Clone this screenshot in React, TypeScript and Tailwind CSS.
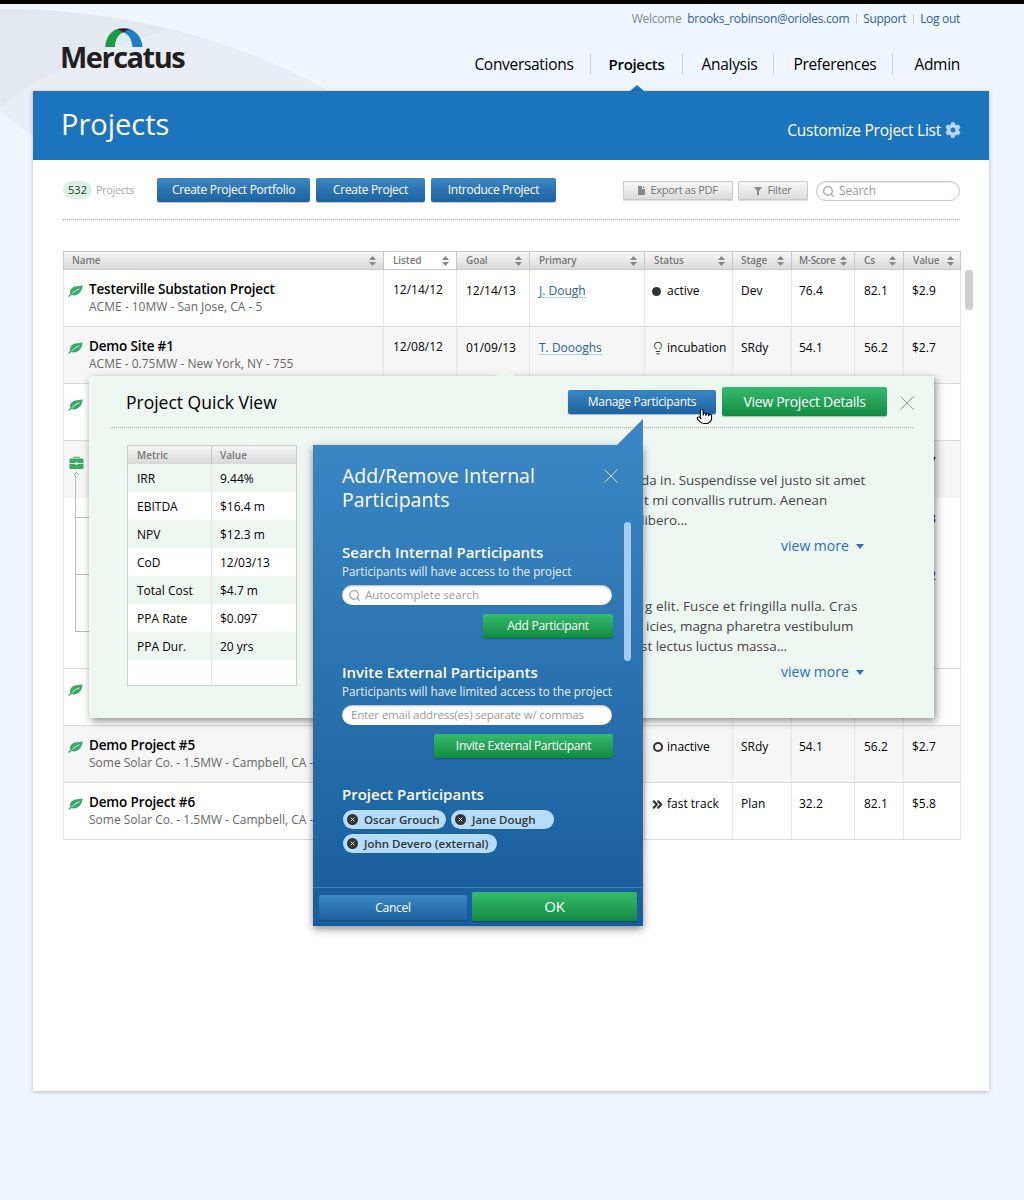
import { Search, Lightbulb, ChevronsRight, Pointer } from 'lucide-react';
import { FaCog } from 'react-icons/fa';

const font = '[font-family:"Open_Sans","Noto_Sans",sans-serif]';

const blueBtn = 'bg-gradient-to-b from-[#3a86c4] to-[#1c639f] text-white rounded-[2px] shadow-[0_1px_1px_rgba(0,0,0,0.25)] flex items-center justify-center tracking-[-0.3px]';
const greenBtn = 'bg-gradient-to-b from-[#35bb6e] to-[#118a42] text-white rounded-[2px] shadow-[0_1px_1px_rgba(0,0,0,0.25)] flex items-center justify-center tracking-[-0.3px]';
const grayBtn = 'bg-gradient-to-b from-[#f7f7f7] to-[#dcdcdc] border border-[#c9c9c9] text-[#777] rounded-[1px] text-[11px] tracking-[-0.3px] flex items-center justify-center gap-[5px] shadow-[0_1px_1px_rgba(0,0,0,0.15)]';

const columns = 'grid grid-cols-[320px_73px_73px_115px_88px_59px_63px_49px_57px]';

const headers = [
  { label: 'Name', cls: 'pl-[8px] bg-transparent' },
  { label: 'Listed', cls: 'pl-[9px] bg-white' },
  { label: 'Goal', cls: 'pl-[9px]' },
  { label: 'Primary', cls: 'pl-[9px]' },
  { label: 'Status', cls: 'pl-[9px]' },
  { label: 'Stage', cls: 'pl-[8px]' },
  { label: 'M-Score', cls: 'pl-[7px] tracking-[-0.4px]' },
  { label: 'Cs', cls: 'pl-[9px]' },
  { label: 'Value', cls: 'pl-[9px]' },
];

const SortArrows = () => (
  <svg width="7" height="10" viewBox="0 0 7 10" className="shrink-0">
    <path d="M3.5 0 L7 4 H0 Z M3.5 10 L7 6 H0 Z" fill="#888" />
  </svg>
);

const LeafIcon = () => (
  <svg width="15" height="12" viewBox="0 0 15 12" className="shrink-0">
    <path d="M0.3 11.5 C0.8 10.2 1.6 9.4 2.4 9 C1.2 6 3 2.6 7 1.6 C9.5 1 12.5 1.2 14.7 0.3 C14.3 3.5 13.5 6.5 11 8.5 C8.5 10.5 5.5 10.8 3.6 9.9 C2.6 10.2 1.8 10.8 1.4 11.7 Z" fill="#3aa968" />
    <path d="M3.6 9 C5.5 6.8 8 5.2 11.5 3.8" stroke="#fff" strokeWidth="0.8" fill="none" />
  </svg>
);

const BriefcaseIcon = () => (
  <svg width="15" height="22" viewBox="0 0 15 22" className="shrink-0 ml-px">
    <path d="M5 2.5 V1.2 H10 V2.5" stroke="#3aa968" strokeWidth="1.1" fill="none" />
    <rect x="0.5" y="2.5" width="14" height="10.5" rx="1.2" fill="#3aa968" />
    <path d="M0.5 7.5 H14.5" stroke="#fff" strokeWidth="0.8" />
    <rect x="6" y="6.5" width="3" height="2" fill="#fff" />
    <path d="M5 19 L7.5 16.5 L10 19" stroke="#3aa968" strokeWidth="0.8" fill="none" />
  </svg>
);

const CloseIcon = ({ color }: { color: string }) => (
  <svg width="14" height="14" viewBox="0 0 14 14">
    <path d="M0.5 0.5 L13.5 13.5 M13.5 0.5 L0.5 13.5" stroke={color} strokeWidth="1" />
  </svg>
);

const Caret = () => (
  <svg width="8" height="5" viewBox="0 0 8 5">
    <path d="M0 0 H8 L4 5 Z" fill="#2d6fae" />
  </svg>
);

const ChipX = () => (
  <svg width="11" height="11" viewBox="0 0 11 11" className="shrink-0">
    <circle cx="5.5" cy="5.5" r="5.5" fill="#333" />
    <path d="M3.6 3.6 L7.4 7.4 M7.4 3.6 L3.6 7.4" stroke="#ddd" strokeWidth="1" />
  </svg>
);

type Row = {
  icon: 'leaf' | 'case' | 'none';
  name?: string;
  sub?: string;
  listed?: string;
  goal?: string;
  primary?: string;
  status?: string;
  statusIcon?: React.ReactNode;
  stage?: string;
  score?: string;
  cs?: string;
  value?: string;
  shaded?: boolean;
  noBorder?: boolean;
};

const rows: Row[] = [
  { icon: 'leaf', name: 'Testerville Substation Project', sub: 'ACME - 10MW - San Jose, CA - 5', listed: '12/14/12', goal: '12/14/13', primary: 'J. Dough', status: 'active', statusIcon: <span className="w-[9px] h-[9px] rounded-full bg-[#333] ml-px" />, stage: 'Dev', score: '76.4', cs: '82.1', value: '$2.9' },
  { icon: 'leaf', name: 'Demo Site #1', sub: 'ACME - 0.75MW - New York, NY - 755', listed: '12/08/12', goal: '01/09/13', primary: 'T. Doooghs', status: 'incubation', statusIcon: <Lightbulb size={14} strokeWidth={1.7} color="#333" />, stage: 'SRdy', score: '54.1', cs: '56.2', value: '$2.7', shaded: true },
  { icon: 'leaf' },
  { icon: 'case', value: '$8.7', shaded: true, noBorder: true },
  { icon: 'none', value: '$1.3', noBorder: true },
  { icon: 'none', value: '$4.2', noBorder: true },
  { icon: 'none', value: '$3.1' },
  { icon: 'leaf' },
  { icon: 'leaf', name: 'Demo Project #5', sub: 'Some Solar Co. - 1.5MW - Campbell, CA - 5', status: 'inactive', statusIcon: <span className="w-[10px] h-[10px] rounded-full border-2 border-[#333] ml-[2px]" />, stage: 'SRdy', score: '54.1', cs: '56.2', value: '$2.7', shaded: true },
  { icon: 'leaf', name: 'Demo Project #6', sub: 'Some Solar Co. - 1.5MW - Campbell, CA - 5', status: 'fast track', statusIcon: <ChevronsRight size={15} strokeWidth={3.5} color="#333" className="-ml-[1px]" />, stage: 'Plan', score: '32.2', cs: '82.1', value: '$5.8' },
];

const metrics = [
  ['IRR', '9.44%'],
  ['EBITDA', '$16.4 m'],
  ['NPV', '$12.3 m'],
  ['CoD', '12/03/13'],
  ['Total Cost', '$4.7 m'],
  ['PPA Rate', '$0.097'],
  ['PPA Dur.', '20 yrs'],
];

const cell = 'border-r border-[#e6e6e6] text-[12px] text-black';

function TableRow({ row }: { row: Row }) {
  return (
    <div className={`${columns} h-[57px] border-l border-[#e6e6e6] ${row.noBorder ? '' : 'border-b border-b-[#dcdcdc]'} ${row.shaded ? 'bg-[#f6f6f6]' : 'bg-white'}`}>
      <div className={`${cell} relative flex pl-[4px] pt-[10px]`}>
        <div className="w-[21px] pt-[5px]">
          {row.icon === 'leaf' && <LeafIcon />}
          {row.icon === 'case' && <BriefcaseIcon />}
        </div>
        {row.name && (
          <div className="whitespace-nowrap">
            <div className="text-[13.5px] leading-[18px] font-semibold text-black tracking-[-0.15px]">{row.name}</div>
            <div className="text-[12px] leading-[18px] text-[#666]">{row.sub}</div>
          </div>
        )}
      </div>
      <div className={`${cell} pl-[9px] pt-[11px]`}>{row.listed}</div>
      <div className={`${cell} pl-[9px] pt-[12px]`}>{row.goal}</div>
      <div className={`${cell} pl-[9px] pt-[12px]`}>
        {row.primary && <span className="text-[#2d6299] border-b border-[#b9cde2] leading-[13px] inline-block">{row.primary}</span>}
      </div>
      <div className={`${cell} pt-[13px] pl-[6px] flex items-start text-[#444] whitespace-nowrap`}>
        <span className="w-[16px] h-[16px] flex items-center">{row.statusIcon}</span>
        <span className="leading-[16px]">{row.status}</span>
      </div>
      <div className={`${cell} pl-[8px] pt-[12px]`}>{row.stage}</div>
      <div className={`${cell} pl-[7px] pt-[12px]`}>{row.score}</div>
      <div className={`${cell} pl-[9px] pt-[12px]`}>{row.cs}</div>
      <div className={`${cell} pl-[8px] pt-[12px]`}>{row.value}</div>
    </div>
  );
}

function ParticipantsModal() {
  return (
    <div className="absolute left-[224px] top-[69px] w-[330px] h-[481px] bg-gradient-to-b from-[#3a86c4] to-[#175d9b] shadow-[0_3px_8px_rgba(0,0,0,0.45)] text-white">
      {/* speech tail pointing at the button */}
      <svg width="26" height="26" viewBox="0 0 26 26" className="absolute right-0 -top-[26px]">
        <path d="M0 26 L26 0 V26 Z" fill="#3a86c4" />
      </svg>
      <div className="absolute left-[29px] top-[19px] w-[240px] text-[19.5px] leading-[24px]">Add/Remove Internal Participants</div>
      <div className="absolute left-[291px] top-[24px]"><CloseIcon color="#cfe2f3" /></div>
      <div className="absolute left-[311px] top-[77px] w-[7px] h-[139px] rounded-full bg-[#a9cbe9]" />

      <div className="absolute left-[29px] top-[97px] w-[271px]">
        <div className="text-[15px] leading-[20px] font-semibold whitespace-nowrap">Search Internal Participants</div>
        <div className="text-[11.7px] leading-[18px] text-[#e6f0f9] whitespace-nowrap">Participants will have access to the project</div>
        <div className="mt-[5px] w-[270px] h-[20px] rounded-full bg-white shadow-[inset_0_1px_2px_rgba(0,0,0,0.3)] flex items-center pl-[6px] gap-[4px] text-[11.5px] text-[#999]">
          <Search size={13} color="#aaa" strokeWidth={2.5} />
          Autocomplete search
        </div>
        <div className="mt-[9px] flex justify-end">
          <div className={`${greenBtn} w-[130px] h-[24px] text-[12px]`}>Add Participant</div>
        </div>

        <div className="mt-[24px] text-[15px] leading-[20px] font-semibold whitespace-nowrap">Invite External Participants</div>
        <div className="text-[11.7px] leading-[18px] text-[#e6f0f9] whitespace-nowrap">Participants will have limited access to the project</div>
        <div className="mt-[5px] w-[270px] h-[20px] rounded-full bg-white shadow-[inset_0_1px_2px_rgba(0,0,0,0.3)] flex items-center pl-[9px] text-[11.5px] tracking-[-0.17px] text-[#999] whitespace-nowrap">
          Enter email address(es) separate w/ commas
        </div>
        <div className="mt-[9px] flex justify-end">
          <div className={`${greenBtn} w-[179px] h-[24px] text-[12px]`}>Invite External Participant</div>
        </div>

        <div className="mt-[26px] text-[15px] leading-[20px] font-semibold">Project Participants</div>
        <div className="mt-[6px] flex flex-wrap gap-x-[5px] gap-y-[5px] pl-[1px]">
          {['Oscar Grouch', 'Jane Dough', 'John Devero (external)'].map((name, i) => (
            <div key={i} className={`${i === 0 || i === 1 ? 'w-[103px]' : ''} h-[19px] rounded-full bg-[#b5dcf9] flex items-center pl-[4px] pr-[9px] gap-[6px] text-[11.5px] font-semibold text-[#333] whitespace-nowrap`}>
              <ChipX />
              {name}
            </div>
          ))}
        </div>
      </div>

      <div className="absolute left-0 right-0 bottom-0 h-[39px] border-t border-[#3a7fb8] flex items-start pt-[4px] pl-[6px] gap-[5px]">
        <div className={`${blueBtn} w-[148px] h-[25px] mt-[3px] text-[12px]`}>Cancel</div>
        <div className={`${greenBtn} w-[165px] h-[29px] text-[15px] font-medium`}>OK</div>
      </div>
    </div>
  );
}

function QuickView() {
  return (
    <div className="absolute left-[26px] top-[125px] w-[845px] h-[342px] bg-[#eef6f2] shadow-[2px_3px_8px_rgba(0,0,0,0.45)]">
      <div className="absolute left-[406px] -top-[7px] w-0 h-0 border-x-[10px] border-x-transparent border-b-[7px] border-b-[#eef6f2]" />

      <div className="mx-[21px] h-[52px] border-b border-dotted border-[#aaa] flex items-start">
        <div className="ml-[16px] mt-[14px] text-[17.5px] leading-[24px] text-black">Project Quick View</div>
        <div className={`${blueBtn} ml-auto mt-[14px] w-[148px] h-[24px] text-[12px]`}>Manage Participants</div>
        <div className={`${greenBtn} ml-[6px] mt-[11px] w-[165px] h-[29px] text-[14px]`}>View Project Details</div>
        <div className="ml-[13px] mt-[20px] -mr-[1px]"><CloseIcon color="#999" /></div>
      </div>

      <div className="absolute left-[38px] top-[69px] w-[170px] border border-[#cfcfcf] bg-white">
        <div className="h-[18px] grid grid-cols-[84px_1fr] bg-gradient-to-b from-[#f5f5f5] to-[#d8d8d8] text-[10px] font-semibold text-[#777] shadow-[0_1px_1px_rgba(0,0,0,0.2)]">
          <div className="pl-[9px] border-r border-[#c4c4c4] leading-[18px]">Metric</div>
          <div className="pl-[8px] leading-[18px]">Value</div>
        </div>
        {metrics.map(([metric, value], i) => (
          <div key={i} className={`grid grid-cols-[84px_1fr] h-[28px] text-[12px] text-black leading-[30px] ${i % 2 === 0 ? 'bg-[#eef6f2]' : 'bg-white'}`}>
            <div className="pl-[9px] border-r border-[#e4e4e4]">{metric}</div>
            <div className="pl-[8px]">{value}</div>
          </div>
        ))}
        <div className="grid grid-cols-[84px_1fr] h-[25px] bg-white">
          <div className="border-r border-[#e4e4e4]" />
          <div />
        </div>
      </div>

      <div className="absolute left-[552px] top-[94px] text-[13.4px] leading-[20px] text-[#444] whitespace-nowrap">
        <div>da in. Suspendisse vel justo sit amet</div>
        <div className="ml-[3px]">t mi convallis rutrum. Aenean</div>
        <div>libero…</div>
        <div className="mt-[6px] ml-[140px] flex items-center gap-[7px] text-[#2d6fae] text-[14px]">view more <Caret /></div>
        <div className="mt-[40px] ml-[4px] tracking-[0.15px]">g elit. Fusce et fringilla nulla. Cras</div>
        <div className="ml-[5px]">icies, magna pharetra vestibulum</div>
        <div>st lectus luctus massa…</div>
        <div className="mt-[6px] ml-[140px] flex items-center gap-[7px] text-[#2d6fae] text-[14px]">view more <Caret /></div>
      </div>

      <ParticipantsModal />
      <Pointer size={17} fill="#fff" color="#000" strokeWidth={1.5} className="absolute left-[607px] top-[32px]" />
    </div>
  );
}

export default function App() {
  return (
    <div className={`${font} relative w-[1024px] h-[1200px] overflow-hidden bg-[#eff6fd]`}>
      <div className="h-1 bg-black" />

      {/* background swoosh behind the logo */}
      <svg width="340" height="140" viewBox="0 0 340 140" className="absolute left-0 top-0">
        <path d="M0 9 C120 8 240 40 328 91 L33 91 L33 90 C22 94 10 100 0 108 Z" fill="#e3e9ef" />
        <path d="M0 108 C30 80 90 50 167 30 C240 45 290 70 328 91 L33 91 L33 136 L0 112 Z" fill="#e8eef4" />
      </svg>

      <header className="relative h-[87px]">
        <div className="absolute right-[64px] top-[7px] flex items-center text-[12px] leading-[16px] tracking-[-0.3px] whitespace-nowrap">
          <span className="text-[#888]">Welcome</span>
          <span className="ml-[6px] text-[#2d6299]">brooks_robinson@orioles.com</span>
          <span className="ml-[7px] mr-[6px] w-px h-[10px] bg-[#c4ccd4]" />
          <span className="text-[#2d6299]">Support</span>
          <span className="ml-[7px] mr-[6px] w-px h-[10px] bg-[#c4ccd4]" />
          <span className="text-[#2d6299]">Log out</span>
        </div>

        <div className="absolute left-[62px] top-[24px]">
          <svg width="38" height="19" viewBox="0 0 38 19" className="ml-[43px] block">
            <path d="M0.3 19 C0.8 10 5 4 12 1 L18.5 4.5 C13 6 10 12 10 19 Z" fill="#1a9a4a" />
            <path d="M37.5 19 C37 10 32 4 25 1 L18.5 4.5 C24 6 27 12 27.5 19 Z" fill="#1c7ec8" />
            <path d="M12 1 C16 0 21 0 25 1 L18.5 4.5 Z" fill="#231f20" />
          </svg>
          <div className="-mt-[3px] -ml-[2px] text-[29px] leading-[26px] font-bold tracking-[-1.5px] text-[#231f20]">Mercatus</div>
        </div>

        <nav className="absolute right-[64px] top-[49px] flex items-center text-[15.5px] leading-[22px] tracking-[-0.3px] text-black whitespace-nowrap">
          <span className="pr-[16px] border-r border-[#ccd3da]">Conversations</span>
          <span className="relative pl-[18px] pr-[17px] border-r border-[#ccd3da] font-semibold text-[15px]">
            Projects
            <span className="absolute left-[26px] top-[32px] w-0 h-0 border-x-[7px] border-x-transparent border-b-[6px] border-b-[#1c75bc] ml-[13px]" />
          </span>
          <span className="pl-[19px] pr-[16px] border-r border-[#ccd3da]">Analysis</span>
          <span className="pl-[19px] pr-[16px] border-r border-[#ccd3da]">Preferences</span>
          <span className="pl-[21px]">Admin</span>
        </nav>
      </header>

      <main className="relative mx-[33px] w-[956px] h-[1000px] bg-white shadow-[0_1px_4px_rgba(0,0,0,0.25)]">
        <div className="h-[69px] bg-[#1c75bc] flex items-start justify-between pl-[28px] pr-[28px] text-white">
          <h1 className="text-[29px] font-normal leading-[66px]">Projects</h1>
          <div className="mt-[29px] flex items-center gap-[4px] text-[15.5px] tracking-[-0.25px] leading-[20px]">
            Customize Project List
            <FaCog size={16} color="#b5d7f5" />
          </div>
        </div>

        <div className="ml-[30px] w-[897px] h-[60px] border-b border-dotted border-[#aaa] flex items-start pt-[18px]">
          <div className="mt-[3px] w-[29px] h-[18px] rounded-full bg-[#deefe6] text-[11px] leading-[18px] text-center text-[#333]">532</div>
          <div className="mt-[3px] ml-[4px] w-[37px] text-[11px] tracking-[-0.4px] leading-[18px] text-[#aaa]">Projects</div>
          <div className={`${blueBtn} ml-[24px] w-[153px] h-[24px] text-[12px]`}>Create Project Portfolio</div>
          <div className={`${blueBtn} ml-[6px] w-[109px] h-[24px] text-[12px]`}>Create Project</div>
          <div className={`${blueBtn} ml-[6px] w-[125px] h-[24px] text-[12px]`}>Introduce Project</div>
          <div className={`${grayBtn} ml-[67px] mt-[3px] w-[110px] h-[19px]`}>
            <svg width="7" height="9" viewBox="0 0 7 9"><path d="M0 0 H4 V3 H7 V9 H0 Z M5 0 L7 2 H5 Z" fill="#888" /></svg>
            Export as PDF
          </div>
          <div className={`${grayBtn} ml-[5px] mt-[3px] w-[70px] h-[19px]`}>
            <svg width="8" height="8" viewBox="0 0 8 8"><path d="M0 0 H8 L5 4 V8 H3 V4 Z" fill="#888" /></svg>
            Filter
          </div>
          <div className="ml-[8px] mt-[3px] w-[144px] h-[20px] rounded-full border border-[#c9c9c9] bg-white shadow-[inset_0_1px_1px_rgba(0,0,0,0.1)] flex items-center pl-[5px] gap-[4px] text-[12px] tracking-[-0.2px] text-[#999]">
            <Search size={13} color="#aaa" strokeWidth={2.5} />
            Search
          </div>
        </div>

        <div className="relative ml-[30px] mt-[31px] w-[898px]">
          <div className={`${columns} h-[19px] border border-[#c9c9c9] bg-gradient-to-b from-[#f7f7f7] to-[#dadada] shadow-[0_1px_1px_rgba(0,0,0,0.2)]`}>
            {headers.map((h) => (
              <div key={h.label} className={`flex items-center justify-between pr-[7px] text-[10px] tracking-[-0.1px] font-semibold text-[#777] border-r border-[#c9c9c9] last:border-r-0 whitespace-nowrap ${h.cls}`}>
                {h.label}
                <SortArrows />
              </div>
            ))}
          </div>

          {rows.map((row, i) => <TableRow key={i} row={row} />)}

          {/* tree connector for the portfolio's children, sits under the quick view */}
          <div className="absolute left-[12px] top-[224px] w-[30px] h-[157px] border-l border-b border-[#bbb]">
            <div className="h-[43px] border-b border-[#bbb]" />
            <div className="h-[57px] border-b border-[#bbb]" />
          </div>

          <QuickView />
          <div className="absolute left-[902px] top-[19px] w-[8px] h-[40px] rounded-[3px] bg-[#cfcfcf]" />
        </div>
      </main>
    </div>
  );
}
